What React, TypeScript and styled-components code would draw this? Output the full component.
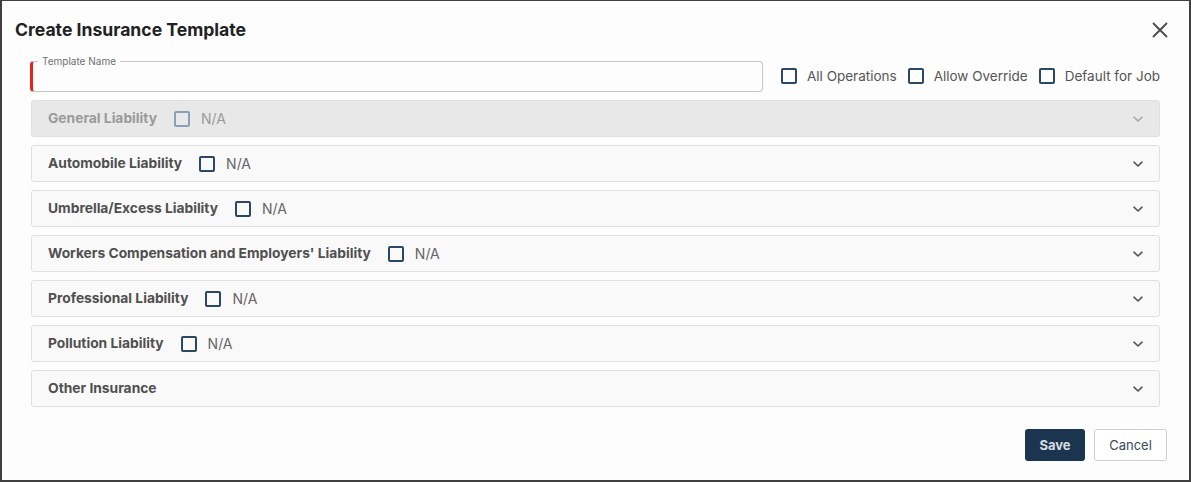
import React from 'react'
import styled, { createGlobalStyle } from 'styled-components'

const GlobalStyle = createGlobalStyle`
    html, body {
        margin: 0;
        padding: 0;
        background: #ffffff;
    }
    * {
        box-sizing: border-box;
    }
`

const sections = [
    { title: 'General Liability', na: true, disabled: true },
    { title: 'Automobile Liability', na: true },
    { title: 'Umbrella/Excess Liability', na: true },
    { title: "Workers Compensation and Employers' Liability", na: true },
    { title: 'Professional Liability', na: true },
    { title: 'Pollution Liability', na: true },
    { title: 'Other Insurance', na: false },
]

function Chevron({ color }: { color: string }) {
    return (
        <svg width="12" height="12" viewBox="0 0 12 12" fill="none">
            <path d="M2 4.2 L6 8 L10 4.2" stroke={color} strokeWidth="1.6" strokeLinecap="round" strokeLinejoin="round" />
        </svg>
    )
}

export default function App() {
    return (
        <>
            <GlobalStyle />
            <Dialog>
                <Header>
                    <Title>Create Insurance Template</Title>
                    <CloseButton aria-label="Close">
                        <svg width="16" height="16" viewBox="0 0 16 16">
                            <path d="M1.5 1.5 L14.5 14.5 M14.5 1.5 L1.5 14.5" stroke="#4a4a4a" strokeWidth="1.8" strokeLinecap="round" />
                        </svg>
                    </CloseButton>
                </Header>
                <Body>
                    <TopRow>
                        <Field>
                            <Legend>Template Name</Legend>
                            <Input />
                        </Field>
                        <Options>
                            <CheckLabel><Box />All Operations</CheckLabel>
                            <CheckLabel><Box />Allow Override</CheckLabel>
                            <CheckLabel><Box />Default for Job</CheckLabel>
                        </Options>
                    </TopRow>
                    <Sections>
                        {sections.map((s) => (
                            <Section key={s.title} $disabled={s.disabled}>
                                <SectionLeft>
                                    <SectionTitle $disabled={s.disabled}>{s.title}</SectionTitle>
                                    {s.na && (
                                        <NaLabel $disabled={s.disabled}>
                                            <Box $disabled={s.disabled} />N/A
                                        </NaLabel>
                                    )}
                                </SectionLeft>
                                <Chevron color={s.disabled ? '#a8a8a8' : '#555555'} />
                            </Section>
                        ))}
                    </Sections>
                </Body>
                <Footer>
                    <SaveButton>Save</SaveButton>
                    <CancelButton>Cancel</CancelButton>
                </Footer>
            </Dialog>
        </>
    )
}

const Dialog = styled.div`
    width: 1191px;
    height: 482px;
    background: #fdfdfd;
    border: 2px solid #3f3f3f;
    border-top-width: 1px;
    font-family: Inter, "Noto Sans", sans-serif;
    display: flex;
    flex-direction: column;
`

const Header = styled.div`
    display: flex;
    justify-content: space-between;
    align-items: center;
    padding: 11px 21px 0 13px;
    height: 45px;
`

const Title = styled.h2`
    margin: 0;
    font-size: 17.6px;
    font-weight: 700;
    color: #222222;
`

const CloseButton = styled.button`
    background: none;
    border: none;
    padding: 0;
    display: flex;
    cursor: pointer;
    margin-top: 2px;
`

const Body = styled.div`
    padding: 0 29px;
    flex: 1;
`

const TopRow = styled.div`
    display: flex;
    align-items: flex-end;
    gap: 18px;
    height: 54px;
    padding-bottom: 8px;
`

const Field = styled.fieldset`
    flex: 1;
    margin: 0 0 0 -1px;
    padding: 0;
    height: 36px;
    border: 1px solid #c4c4c4;
    border-left: 3px solid #e5231b;
    border-radius: 4px;
    min-width: 0;
`

const Legend = styled.legend`
    font-size: 10px;
    color: #6f6f6f;
    padding: 0 4px;
    margin-left: 5px;
    line-height: 1;
`

const Input = styled.input`
    width: 100%;
    height: 24px;
    border: none;
    background: transparent;
    outline: none;
`

const Options = styled.div`
    display: flex;
    align-items: center;
    gap: 11px;
    height: 31px;
    margin-bottom: 1px;
`

const CheckLabel = styled.label`
    display: flex;
    align-items: center;
    gap: 10px;
    font-size: 13.5px;
    color: #555555;
    white-space: nowrap;
`

const Box = styled.span<{ $disabled?: boolean }>`
    width: 16px;
    height: 16px;
    border: 2px solid ${(p) => (p.$disabled ? '#8aa0b8' : '#2b4766')};
    border-radius: 2px;
    background: transparent;
    flex-shrink: 0;
`

const Sections = styled.div`
    display: flex;
    flex-direction: column;
    gap: 8px;
`

const Section = styled.div<{ $disabled?: boolean }>`
    display: flex;
    justify-content: space-between;
    align-items: center;
    height: 37px;
    padding: 0 15px 0 16px;
    background: ${(p) => (p.$disabled ? '#e8e8e8' : '#f9f9f9')};
    border: 1px solid #e0e0e0;
    border-radius: 3px;
`

const SectionLeft = styled.div`
    display: flex;
    align-items: center;
    gap: 17px;
`

const SectionTitle = styled.span<{ $disabled?: boolean }>`
    font-size: 13.8px;
    font-weight: 700;
    color: ${(p) => (p.$disabled ? '#9a9a9a' : '#505050')};
    margin-top: -1px;
`

const NaLabel = styled.label<{ $disabled?: boolean }>`
    display: flex;
    align-items: center;
    gap: 11px;
    font-size: 14px;
    color: ${(p) => (p.$disabled ? '#9a9a9a' : '#666666')};
`

const Footer = styled.div`
    display: flex;
    justify-content: flex-end;
    gap: 9px;
    padding: 0 22px 19px 0;
`

const SaveButton = styled.button`
    width: 60px;
    height: 32px;
    background: #1b3551;
    color: #d9dde2;
    border: none;
    border-radius: 3px;
    font-family: inherit;
    font-size: 13px;
    font-weight: 700;
`

const CancelButton = styled.button`
    width: 73px;
    height: 32px;
    background: #ffffff;
    color: #3b4a5c;
    border: 1px solid #cfcfcf;
    border-radius: 3px;
    font-family: inherit;
    font-size: 13px;
`
